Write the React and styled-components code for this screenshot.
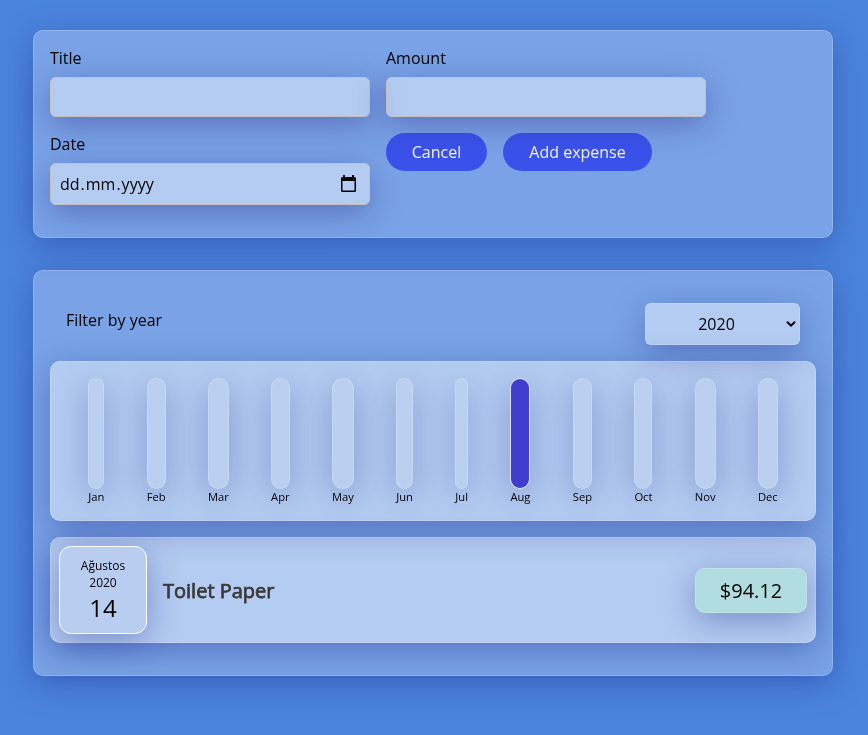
import React from "react";
import styled, { createGlobalStyle, css } from "styled-components";

const GlobalStyle = createGlobalStyle`
  * { box-sizing: border-box; margin: 0; padding: 0; }
  body {
    min-height: 100vh;
    background: #4b84dd;
    color: #000;
    font-family: "Open Sans", "Noto Sans", sans-serif;
    font-size: 16px;
    line-height: 22px;
  }
`;

const glass = css`
  background: rgba(255, 255, 255, 0.25);
  border: 1px solid rgba(255, 255, 255, 0.18);
  border-radius: 10px;
  box-shadow: 0 8px 32px 0 rgba(31, 38, 135, 0.37);
  backdrop-filter: blur(0.5px);
`;

const Page = styled.main`
  display: flex;
  flex-direction: column;
  gap: 32px;
  width: 800px;
  margin: 0 0 0 33px;
  padding: 30px 0 59px;
`;

const Panel = styled.section`
  ${glass}
  background: rgba(255, 255, 255, 0.26);
  padding: 16px;
`;

const Form = styled.form`
  display: grid;
  grid-template-columns: 320px 320px;
  gap: 16px;
  align-items: start;
  padding-bottom: 16px;
`;

const Control = styled.label`
  display: flex;
  flex-direction: column;
  gap: 8px;
`;

const fieldStyle = css`
  ${glass}
  width: 100%;
  border-color: #c4c2c0;
  border-radius: 6px;
  padding: 8px;
  font: inherit;
  color: #000;
  box-shadow: 0 8px 32px 0 rgba(50, 34, 135, 0.4);
`;

const Input = styled.input`
  ${fieldStyle}
  height: 40px;
  outline: none;
`;

const DateField = styled.div`
  ${fieldStyle}
  display: flex;
  align-items: center;
  justify-content: space-between;
  height: 42px;
  padding: 0 12px 0 8px;
`;

const DatePart = styled.span`
  padding: 0 1px;
`;

const Actions = styled.div`
  display: flex;
  gap: 16px;
`;

const Button = styled.button`
  width: ${(p) => p.$width}px;
  height: 38px;
  border: 0;
  border-radius: 19px;
  background: rgba(44, 64, 234, 0.82);
  color: #f2f4ff;
  font: inherit;
`;

const FilterRow = styled.div`
  display: flex;
  justify-content: space-between;
  padding: 16px;
`;

const FilterLabel = styled.label`
  padding-top: 6px;
`;

const SelectBox = styled.div`
  position: relative;
  width: 155px;
  height: 42px;
`;

const Select = styled.select`
  ${glass}
  appearance: none;
  width: 100%;
  height: 100%;
  padding-right: 12px;
  border-radius: 6px;
  font: inherit;
  color: #000;
  text-align: center;
  text-align-last: center;
  outline: none;
`;

const Arrow = styled.svg`
  position: absolute;
  top: 17px;
  right: 4px;
  pointer-events: none;
`;

const Chart = styled.div`
  ${glass}
  display: flex;
  justify-content: space-around;
  height: 160px;
  padding: 16px;
`;

const Month = styled.div`
  display: flex;
  flex-direction: column;
  font-size: 11.2px;
  line-height: 15px;
  text-align: center;
`;

const Bar = styled.div`
  ${glass}
  display: flex;
  flex-direction: column;
  justify-content: flex-end;
  width: 100%;
  height: 111px;
  border-radius: 12px;
  border-color: rgba(255, 255, 255, ${(p) => (p.$active ? 0.4 : 0.18)});
  background: #bbd0f1;
  backdrop-filter: none;
  overflow: hidden;
`;

const Fill = styled.div`
  height: 100%;
  background: #403ccd;
`;

const Expense = styled.article`
  ${glass}
  display: flex;
  align-items: center;
  height: 106px;
  margin: 16px 0;
  padding: 8px;
`;

const DateBadge = styled.div`
  ${glass}
  display: flex;
  flex-direction: column;
  align-items: center;
  justify-content: center;
  width: 88px;
  height: 88px;
  border-color: #fff;
  border-radius: 12px;
  background: #b8cdf0;
  backdrop-filter: none;
  font-size: 12px;
  line-height: 17px;
`;

const Day = styled.span`
  font-size: 24px;
  line-height: 33px;
`;

const MonthName = styled.span`
  padding-top: 1px;
`;

const ExpenseTitle = styled.h2`
  flex: 1;
  margin-left: 16px;
  padding-top: 2px;
  color: #3a3a3a;
  font-size: 20px;
  font-weight: 400;
  -webkit-text-stroke: 0.75px #3a3a3a;
`;

const Price = styled.div`
  ${glass}
  display: grid;
  place-items: center;
  width: 112px;
  height: 45px;
  padding-top: 1px;
  background: #b2dde0;
  font-size: 20px;
`;

const months = ["Jan", "Feb", "Mar", "Apr", "May", "Jun", "Jul", "Aug", "Sep", "Oct", "Nov", "Dec"];

function CalendarIcon() {
  return (
    <svg width="17" height="18" viewBox="0 0 17 18" aria-hidden="true">
      <path
        fillRule="evenodd"
        d="M3 0h2v2h7V0h2v2h.5a1.500 1.500 0 0 1 1.500 1.500v12a1.500 1.500 0 0 1-1.500 1.500h-12A1.500 1.500 0 0 1 1 15.500v-12A1.500 1.500 0 0 1 2.500 2H3zM2.500 6v9.500h12V6z"
      />
    </svg>
  );
}

export default function App() {
  return (
    <>
      <GlobalStyle />
      <Page>
        <Panel>
          <Form>
            <Control>
              Title
              <Input type="text" />
            </Control>
            <Control>
              Amount
              <Input type="text" />
            </Control>
            <Control as="div">
              <span>Date</span>
              <DateField>
                <span>
                  <DatePart>dd</DatePart>.<DatePart>mm</DatePart>.<DatePart>yyyy</DatePart>
                </span>
                <CalendarIcon />
              </DateField>
            </Control>
            <Actions>
              <Button type="button" $width={101}>Cancel</Button>
              <Button type="button" $width={149}>Add expense</Button>
            </Actions>
          </Form>
        </Panel>
        <Panel>
          <FilterRow>
            <FilterLabel htmlFor="year">Filter by year</FilterLabel>
            <SelectBox>
              <Select id="year" defaultValue="2020">
                <option value="2020">2020</option>
              </Select>
              <Arrow width="10" height="8" viewBox="0 0 10 8" aria-hidden="true">
                <path d="M1 1.700 5 5.700 9 1.700" fill="none" stroke="#000" strokeWidth="2" />
              </Arrow>
            </SelectBox>
          </FilterRow>
          <Chart>
            {months.map((month) => (
              <Month key={month}>
                <Bar $active={month === "Aug"}>{month === "Aug" && <Fill />}</Bar>
                {month}
              </Month>
            ))}
          </Chart>
          <Expense>
            <DateBadge>
              <MonthName>Ağustos</MonthName>
              <span>2020</span>
              <Day>14</Day>
            </DateBadge>
            <ExpenseTitle>Toilet Paper</ExpenseTitle>
            <Price>$94.12</Price>
          </Expense>
        </Panel>
      </Page>
    </>
  );
}
